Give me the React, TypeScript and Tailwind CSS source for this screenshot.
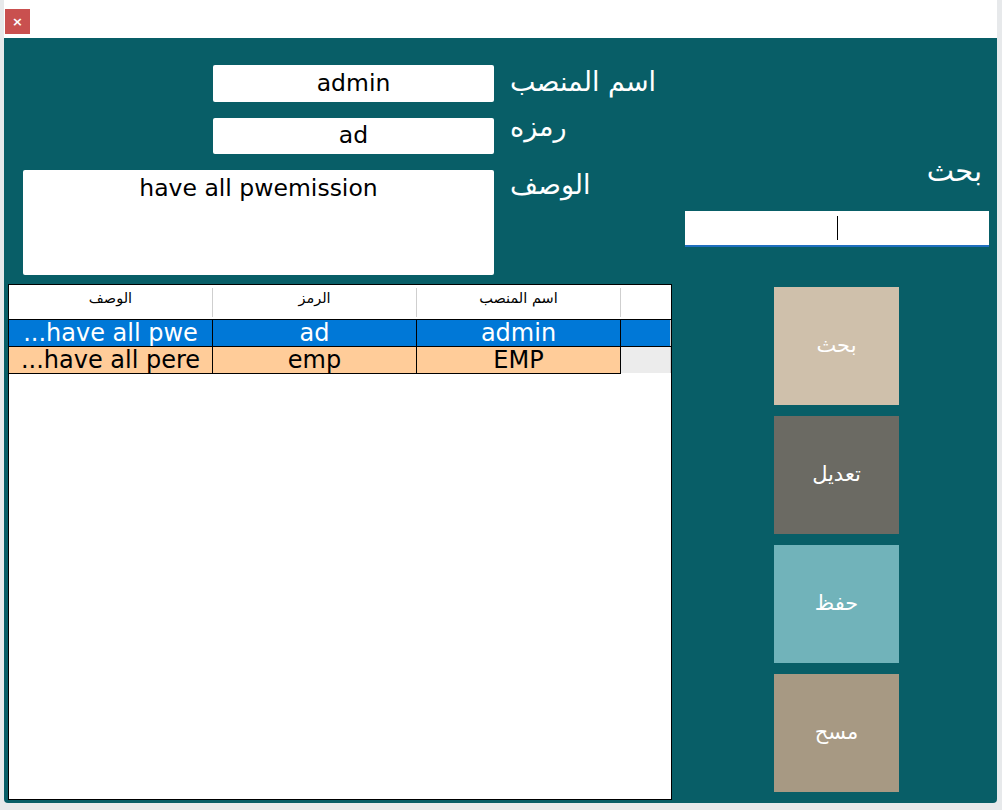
const rows = [
  { desc: "...have all pwe", code: "ad", name: "admin", selected: true },
  { desc: "...have all pere", code: "emp", name: "EMP", selected: false },
];

const buttons = [
  { label: "بحث", bg: "bg-[#cfc0ab]" },
  { label: "تعديل", bg: "bg-[#6b6a63]" },
  { label: "حفظ", bg: "bg-[#71b3ba]" },
  { label: "مسح", bg: "bg-[#a79983]" },
];

const ui = { fontFamily: '"DejaVu Sans", Verdana, sans-serif' };

export default function App() {
  return (
    <div className="w-[1002px] h-[810px] bg-[#e7e9eb] overflow-hidden" style={ui}>
      <div className="ml-[4px] w-[993px] h-[803px] flex flex-col rounded-b-[4px] overflow-hidden">
        {/* title bar */}
        <div className="h-[38px] bg-white flex items-start pt-[9px] pl-[1px] shrink-0">
          <div className="w-[25px] h-[25px] bg-[#c9504f] flex items-center justify-center text-white text-[13px] font-bold leading-none">
            ×
          </div>
        </div>

        <div className="flex-1 bg-[#085e67] flex">
          {/* left: form + grid */}
          <div className="w-[668px] flex flex-col pl-[4px] pt-[27px] shrink-0">
            <div className="flex items-start">
              <div className="ml-[205px] w-[281px] h-[37px] bg-white rounded-[2px] flex items-center justify-center text-[23.5px] text-black">
                admin
              </div>
              <div dir="rtl" className="ml-[16px] text-white text-[27px] leading-[34px] whitespace-nowrap">
                اسم المنصب
              </div>
            </div>

            <div className="flex items-start mt-[16px]">
              <div className="ml-[205px] w-[281px] h-[36px] bg-white rounded-[2px] flex items-center justify-center text-[23.5px] text-black">
                ad
              </div>
              <div dir="rtl" className="ml-[16px] -mt-[8px] text-white text-[27px] leading-[34px]">
                رمزه
              </div>
            </div>

            <div className="flex items-start mt-[16px]">
              <div className="ml-[15px] w-[471px] h-[105px] bg-white rounded-[2px] pt-[3px] text-center text-[23.5px] leading-[30px] text-black">
                have all pwemission
              </div>
              <div dir="rtl" className="ml-[16px] -mt-[2px] text-white text-[27px] leading-[34px]">
                الوصف
              </div>
            </div>

            {/* data grid */}
            <div className="mt-[9px] w-[664px] h-[516px] bg-white border border-black flex flex-col">
              <div className="h-[34px] flex pt-[3px] pb-[2px] text-[14.5px] leading-[18px] text-black">
                {["الوصف", "الرمز", "اسم المنصب"].map((h) => (
                  <div key={h} dir="rtl" className="w-[204px] border-r border-[#cfcfcf] text-center pt-[1px]">
                    {h}
                  </div>
                ))}
                <div className="flex-1" />
              </div>
              {rows.map((r) => (
                <div
                  key={r.name}
                  className={`h-[27px] flex border-t border-black text-[24px] leading-[27px] ${
                    r.selected ? "bg-[#0078d7] text-white" : "bg-[#ffcc99] text-black"
                  }`}
                >
                  <div className="w-[204px] border-r border-black text-center overflow-hidden whitespace-nowrap">{r.desc}</div>
                  <div className="w-[204px] border-r border-black text-center">{r.code}</div>
                  <div className="w-[204px] border-r border-black text-center">{r.name}</div>
                  <div
                    className={`flex-1 ${
                      r.selected ? "bg-[#0078d7] border-r border-[#d0d0d0]" : "bg-[#ececec] border-r border-[#d0d0d0]"
                    }`}
                  />
                </div>
              ))}
              <div className="w-[612px] border-t border-black" />
            </div>
          </div>

          {/* right: search + actions */}
          <div className="flex-1 flex flex-col">
            <div dir="rtl" className="self-end mr-[15px] mt-[114px] text-white text-[29px] leading-[38px]">
              بحث
            </div>
            <div className="ml-[13px] mt-[21px] w-[304px] h-[36px] bg-white border-b-2 border-[#1f6fbf] flex items-center justify-center">
              <div className="w-px h-[24px] bg-black" />
            </div>
            <div className="ml-[102px] mt-[40px] flex flex-col gap-[11px]">
              {buttons.map((b) => (
                <div
                  key={b.label}
                  dir="rtl"
                  className={`w-[125px] h-[118px] ${b.bg} flex items-center justify-center text-white text-[21px]`}
                >
                  {b.label}
                </div>
              ))}
            </div>
          </div>
        </div>
      </div>
    </div>
  );
}
